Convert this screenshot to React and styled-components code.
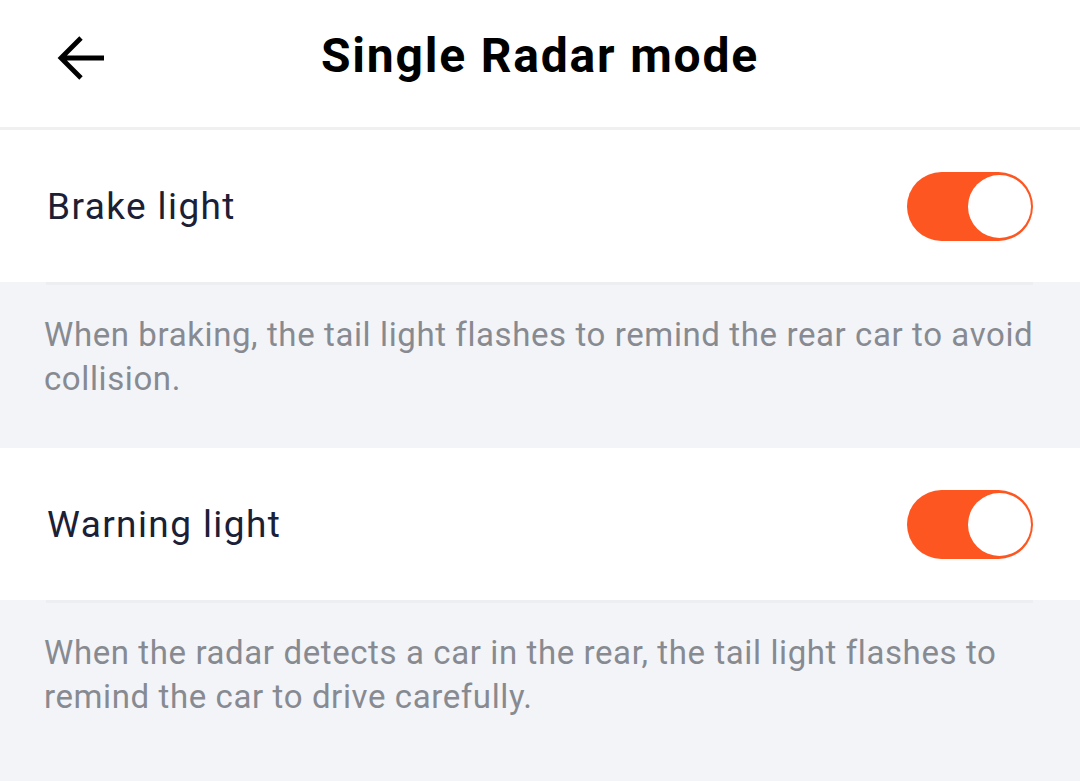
import React from "react";
import styled, { createGlobalStyle } from "styled-components";

const Global = createGlobalStyle`
  html, body { margin: 0; padding: 0; background: #f3f4f8; }
  body { font-family: Roboto, "Noto Sans", sans-serif; }
`;

const Page = styled.div`
  width: 1080px;
  min-height: 781px;
  background: #f3f4f8;
`;

const Header = styled.header`
  height: 127px;
  border-bottom: 3px solid #f0f0f0;
  background: #fff;
  display: flex;
  align-items: center;
  justify-content: center;
  position: relative;
`;

const BackButton = styled.button`
  position: absolute;
  left: 52px;
  top: 30px;
  width: 58px;
  height: 56px;
  border: 0;
  padding: 0;
  background: transparent;
  display: flex;
  align-items: center;
  justify-content: center;
`;

const Title = styled.h1`
  margin: 0;
  font-family: Roboto, sans-serif;
  font-weight: 700;
  font-size: 48px;
  letter-spacing: 1.8px;
  color: #000;
  transform: translateY(-8px);
`;

const Row = styled.div`
  background: #fff;
  height: 152px;
  padding: 0 47px;
  display: flex;
  align-items: center;
  justify-content: space-between;
  position: relative;
  margin-bottom: 3px;
  &::after {
    content: "";
    position: absolute;
    left: 46px;
    right: 47px;
    bottom: -3px;
    height: 3px;
    background: #eceef2;
  }
`;

const Label = styled.span`
  font-size: 37px;
  letter-spacing: 1.4px;
  color: #1b2036;
  transform: translateY(0px);
`;

const Switch = styled.div`
  width: 126px;
  height: 69px;
  border-radius: 35px;
  background: #fe5621;
  display: flex;
  align-items: center;
  justify-content: ${(p) => (p.$on ? "flex-end" : "flex-start")};
  padding: 0 2px;
  box-sizing: border-box;
`;

const Knob = styled.div`
  width: 63px;
  height: 63px;
  border-radius: 50%;
  background: #fff;
`;

const Desc = styled.div`
  background: #f3f4f8;
  height: 163px;
  box-sizing: border-box;
  padding: 28px 44px 0 44px;
  font-size: 33px;
  letter-spacing: 0.6px;
  line-height: 44px;
  color: #878b91;
`;

const items = [
  {
    label: "Brake light",
    desc: "When braking, the tail light flashes to remind the rear car to avoid collision.",
  },
  {
    label: "Warning light",
    desc: "When the radar detects a car in the rear, the tail light flashes to remind the car to drive carefully.",
  },
];

export default function App() {
  return (
    <Page>
      <Global />
      <Header>
        <BackButton aria-label="Back">
          <svg width="50" height="46" viewBox="0 0 50 46" fill="none">
            <path d="M48 23H5M25 3L5 23l20 20" stroke="#000" strokeWidth="4.8" strokeLinecap="butt" />
          </svg>
        </BackButton>
        <Title>Single Radar mode</Title>
      </Header>
      {items.map((it) => (
        <React.Fragment key={it.label}>
          <Row>
            <Label>{it.label}</Label>
            <Switch $on>
              <Knob />
            </Switch>
          </Row>
          <Desc>{it.desc}</Desc>
        </React.Fragment>
      ))}
    </Page>
  );
}
